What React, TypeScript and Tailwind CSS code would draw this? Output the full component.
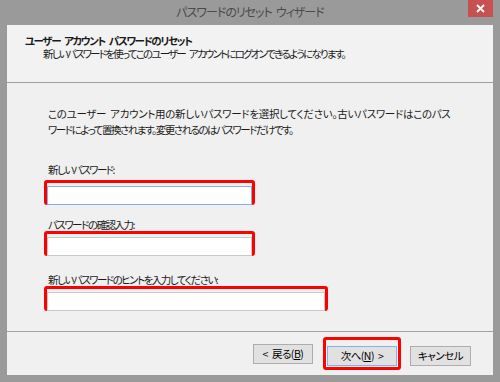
import React from "react"

const jp = "font-['Noto_Sans_CJK_JP','Noto_Sans',sans-serif] [font-feature-settings:'palt']"

// half-width gap; plain spaces vanish under the tight tracking
const Sp = () => <span className="inline-block w-[4px]" />

const Field = ({ label, width, focused, boxTop }: { label: string; width: string; focused?: boolean; boxTop: string }) => (
  <div className="flex flex-col">
    <div className="h-[12px] leading-[12px] text-[10.5px] tracking-[-1.5px] pl-[4px] whitespace-nowrap">{label}</div>
    <div className={`${boxTop} ${width} h-[25px] border-[3px] border-[#ff0000] rounded-[3px]`}>
      <input
        type="password"
        className={`w-full h-full bg-white border outline-none ${focused ? "border-[#7eb4ea]" : "border-[#c8c8c8]"}`}
      />
    </div>
  </div>
)

const WinButton = ({ children, width, isDefault }: { children: React.ReactNode; width: string; isDefault?: boolean }) => (
  <button
    type="button"
    className={`${width} h-[20px] bg-[#e1e1e1] border text-[10.5px] tracking-[-0.5px] leading-[18px] text-black whitespace-nowrap ${isDefault ? "border-[#7eb4ea]" : "border-[#adadad]"}`}
  >
    {children}
  </button>
)

export default function App() {
  return (
    <div className={`${jp} w-[500px] h-[382px] bg-[#9a9a9a] flex flex-col text-[#1a1a1a]`}>
      {/* title bar */}
      <div className="relative h-[25px] flex items-center justify-center">
        <span className="text-[12px] tracking-[-1px] text-[#4a4a4a] leading-[25px] -mt-[2px] whitespace-nowrap">
          パスワードのリセット<Sp />ウィザード
        </span>
        <button
          type="button"
          className="absolute top-0 right-[7px] w-[25px] h-[17px] bg-[#c75050] flex items-center justify-center"
        >
          <svg width="9" height="9" viewBox="0 0 9 9">
            <path d="M1 1 L8 8 M8 1 L1 8" stroke="#fff" strokeWidth="1.8" />
          </svg>
        </button>
      </div>

      <div className="flex-1 mx-[7px] mb-[7px] flex flex-col bg-[#f0f0f0]">
        {/* header */}
        <div className="h-[58px] bg-[#f2f2f2] border-b border-[#a0a0a0] pt-[10px] pl-[18px]">
          <div className="text-[10.5px] tracking-[-1.4px] leading-[12px] font-bold whitespace-nowrap">
            ユーザー<Sp />アカウント<Sp />パスワードのリセット
          </div>
          <div className="mt-[1px] text-[10.5px] tracking-[-1.8px] leading-[12px] pl-[18px] whitespace-nowrap">
            新しいパスワードを使ってこのユーザー<Sp />アカウントにログオンできるようになります。
          </div>
        </div>

        {/* body */}
        <div className="flex-1 pt-[23px] pl-[37px] flex flex-col">
          <p className="text-[10.5px] leading-[16px] pl-[4px] whitespace-nowrap">
            <span className="tracking-[-0.3px]">このユーザー<Sp />アカウント用の新しいパスワードを選択してください。古いパスワードはこのパス</span>
            <br />
            <span className="tracking-[-1.5px]">ワードによって置換されます。変更されるのはパスワードだけです。</span>
          </p>
          <div className="mt-[26px] flex flex-col">
            <Field label="新しいパスワード:" width="w-[211px]" focused boxTop="mt-[4px]" />
            <div className="mt-[14px]">
              <Field label="パスワードの確認入力:" width="w-[211px]" boxTop="mt-[0px]" />
            </div>
            <div className="mt-[18px]">
              <Field label="新しいパスワードのヒントを入力してください:" width="w-[284px]" boxTop="mt-[0px]" />
            </div>
          </div>
        </div>

        {/* footer */}
        <div className="h-[44px] border-t border-[#a0a0a0] flex items-center justify-end pr-[22px]">
          <WinButton width="w-[60px]">
            &lt;<Sp />戻る(<span className="underline">B</span>)
          </WinButton>
          <div className="ml-[10px] p-px border-[3px] border-[#ff0000] rounded-[3px]">
            <WinButton width="w-[70px]" isDefault>
              次へ(<span className="underline">N</span>)<Sp />&gt;
            </WinButton>
          </div>
          <div className="ml-[9px]">
            <WinButton width="w-[61px]">キャンセル</WinButton>
          </div>
        </div>
      </div>
    </div>
  )
}
